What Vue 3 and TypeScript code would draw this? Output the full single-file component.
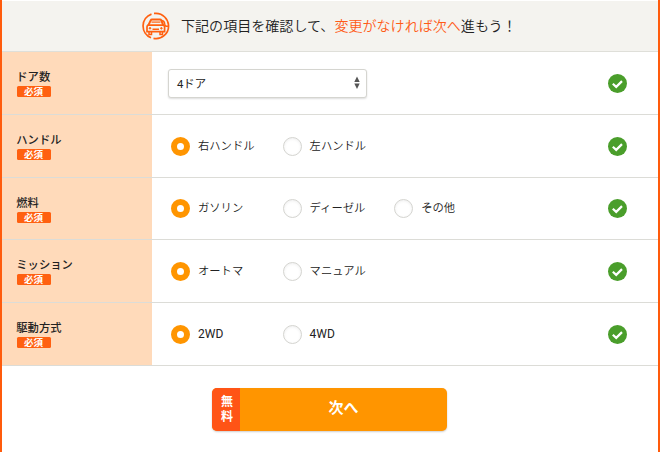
<script setup lang="ts">
import { ref } from 'vue'

interface Field {
  label: string
  options: string[]
  select?: boolean
}

const fields: Field[] = [
  { label: 'ドア数', options: ['4ドア'], select: true },
  { label: 'ハンドル', options: ['右ハンドル', '左ハンドル'] },
  { label: '燃料', options: ['ガソリン', 'ディーゼル', 'その他'] },
  { label: 'ミッション', options: ['オートマ', 'マニュアル'] },
  { label: '駆動方式', options: ['2WD', '4WD'] },
]

const chosen = ref<number[]>(fields.map(() => 0))
</script>

<template>
  <main class="panel">
    <header class="heading">
      <svg class="car" viewBox="0 0 28 28" fill="none" stroke="#ff6010">
        <path d="M9.5 2.1A12.6 12.6 0 0 0 9 25.7M11.5 26.4A12.6 12.6 0 0 0 26.5 13C26 7 21 1.5 14 1.4H12" stroke-width="1.7" />
        <path d="M6.4 13.1 8.8 8.2Q9.1 7.6 10 7.6H18Q18.9 7.6 19.2 8.2L21.2 13.1" stroke-width="2" />
        <path d="M9.5 10.1H18.5" stroke-width="1.2" />
        <path d="M5.9 13.2H21.5Q22.6 13.8 22.6 15V19.6H5V15Q5 13.8 5.9 13.2Z" stroke-width="1.7" />
        <path d="M10.5 17.2H17M7 20V22.5H9.5V20M18 20V22.5H20.5V20" stroke-width="1.5" />
        <circle cx="8" cy="16.3" r=".8" fill="#ff6010" />
        <circle cx="19.4" cy="16.3" r=".8" fill="#ff6010" />
        <path d="M20 8.5Q22.4 9 22.7 12T26 14" stroke-width="1.5" />
      </svg>
      <p>下記の項目を確認して、<em>変更がなければ次へ</em>進もう！</p>
    </header>
    <section v-for="(field, i) in fields" :key="field.label" class="row">
      <div class="name">
        <span class="label">{{ field.label }}</span>
        <span class="badge">必須</span>
      </div>
      <div class="value">
        <button v-if="field.select" class="select" type="button">
          <span>{{ field.options[chosen[i]] }}</span>
          <svg viewBox="0 0 6 14" fill="#555"><path d="M3 .5 5.7 6H.3zM3 13 5.7 7.5H.3z" /></svg>
        </button>
        <div v-else class="options">
          <div v-for="(option, n) in field.options" :key="option" class="option" @click="chosen[i] = n">
            <span class="radio" :class="{ on: chosen[i] === n }"></span>
            <span :class="{ latin: /^\w+$/.test(option) }">{{ option }}</span>
          </div>
        </div>
        <svg class="check" viewBox="0 0 19 19">
          <circle cx="9.5" cy="9.5" r="9.5" fill="#4a9e2b" />
          <path d="M4.8 9.8 8.2 12.9 14 7.1" fill="none" stroke="#fff" stroke-width="2.2" />
        </svg>
      </div>
    </section>
    <footer class="foot">
      <button class="next" type="button">
        <span class="free">無料</span>
        <span class="text">次へ</span>
      </button>
    </footer>
  </main>
</template>

<style>
body { margin: 0; overflow: hidden; background: #fff; }
</style>

<style scoped>
.panel {
  box-sizing: border-box;
  height: 452px;
  padding-top: 1px;
  border: solid #ff5b0c;
  border-width: 0 2px;
  color: #222;
  font-family: Roboto, "Noto Sans CJK JP", sans-serif;
  font-size: 11.3px;
}
button { padding: 0; border: 0; font: inherit; color: inherit; text-align: left; }
.heading {
  box-sizing: border-box;
  height: 51px;
  display: flex;
  align-items: center;
  gap: 11.5px;
  padding-left: 139.5px;
  background: #f4f3ef;
  border-bottom: 1px solid #dfdfd9;
}
.car { width: 28px; height: 28px; }
.heading p { margin: 0; color: #222; font-size: 14.05px; font-weight: 350; line-height: 20px; white-space: nowrap; }
.heading em { font-style: normal; color: #ff5b17; }
.row {
  box-sizing: border-box;
  height: 62.75px;
  display: flex;
  border-bottom: 1px solid #dcdcd7;
}
.name {
  box-sizing: border-box;
  width: 150px;
  padding: 17px 0 0 15px;
  background: #ffdaba;
}
.label { display: block; height: 17px; margin-left: -0.7px; line-height: 17px; font-weight: 500; }
.badge {
  display: block;
  width: 34px;
  height: 11px;
  border-radius: 1.5px;
  background: #ff6010;
  color: #fff;
  font-size: 9.5px;
  font-weight: 700;
  line-height: 11px;
  text-indent: -1px;
  text-align: center;
}
.value {
  flex: 1;
  display: flex;
  align-items: center;
  justify-content: space-between;
  padding: 1px 31px 0 16px;
}
.select {
  box-sizing: border-box;
  width: 199px;
  height: 29px;
  display: flex;
  align-items: center;
  justify-content: space-between;
  padding: 0 6px 1px 8px;
  border: 1px solid #d5d5d0;
  border-radius: 3px;
  background: #fff;
  box-shadow: 0 1px 2px #0002;
}
.select svg { width: 6px; height: 14px; }
.options { display: flex; padding-left: 3px; font-weight: 350; }
.option { width: 111.6px; display: flex; align-items: center; gap: 8px; line-height: 17px; white-space: nowrap; }
.latin { font-size: 12px; font-weight: 400; }
.radio {
  box-sizing: border-box;
  width: 19px;
  height: 19px;
  border: 1px solid #d4d4d0;
  border-radius: 50%;
  background: #fff;
  box-shadow: inset 0 1px 3px #0001;
}
.radio.on { border: 6px solid #ff9500; box-shadow: none; }
.check { width: 19px; height: 19px; }
.foot { display: flex; justify-content: center; padding: 22.25px 1px 0 0; }
.next {
  width: 235px;
  height: 43px;
  display: flex;
  overflow: hidden;
  border-radius: 5px;
  background: #ff9500;
  color: #fff;
  font-weight: 700;
  box-shadow: 0 1px 2px #0003;
}
.free {
  width: 28px;
  display: flex;
  align-items: center;
  justify-content: center;
  background: #ff5416;
  writing-mode: vertical-rl;
  font-size: 12px;
  letter-spacing: 3px;
}
.text { flex: 1; font-size: 15px; line-height: 41px; text-align: center; }
</style>
